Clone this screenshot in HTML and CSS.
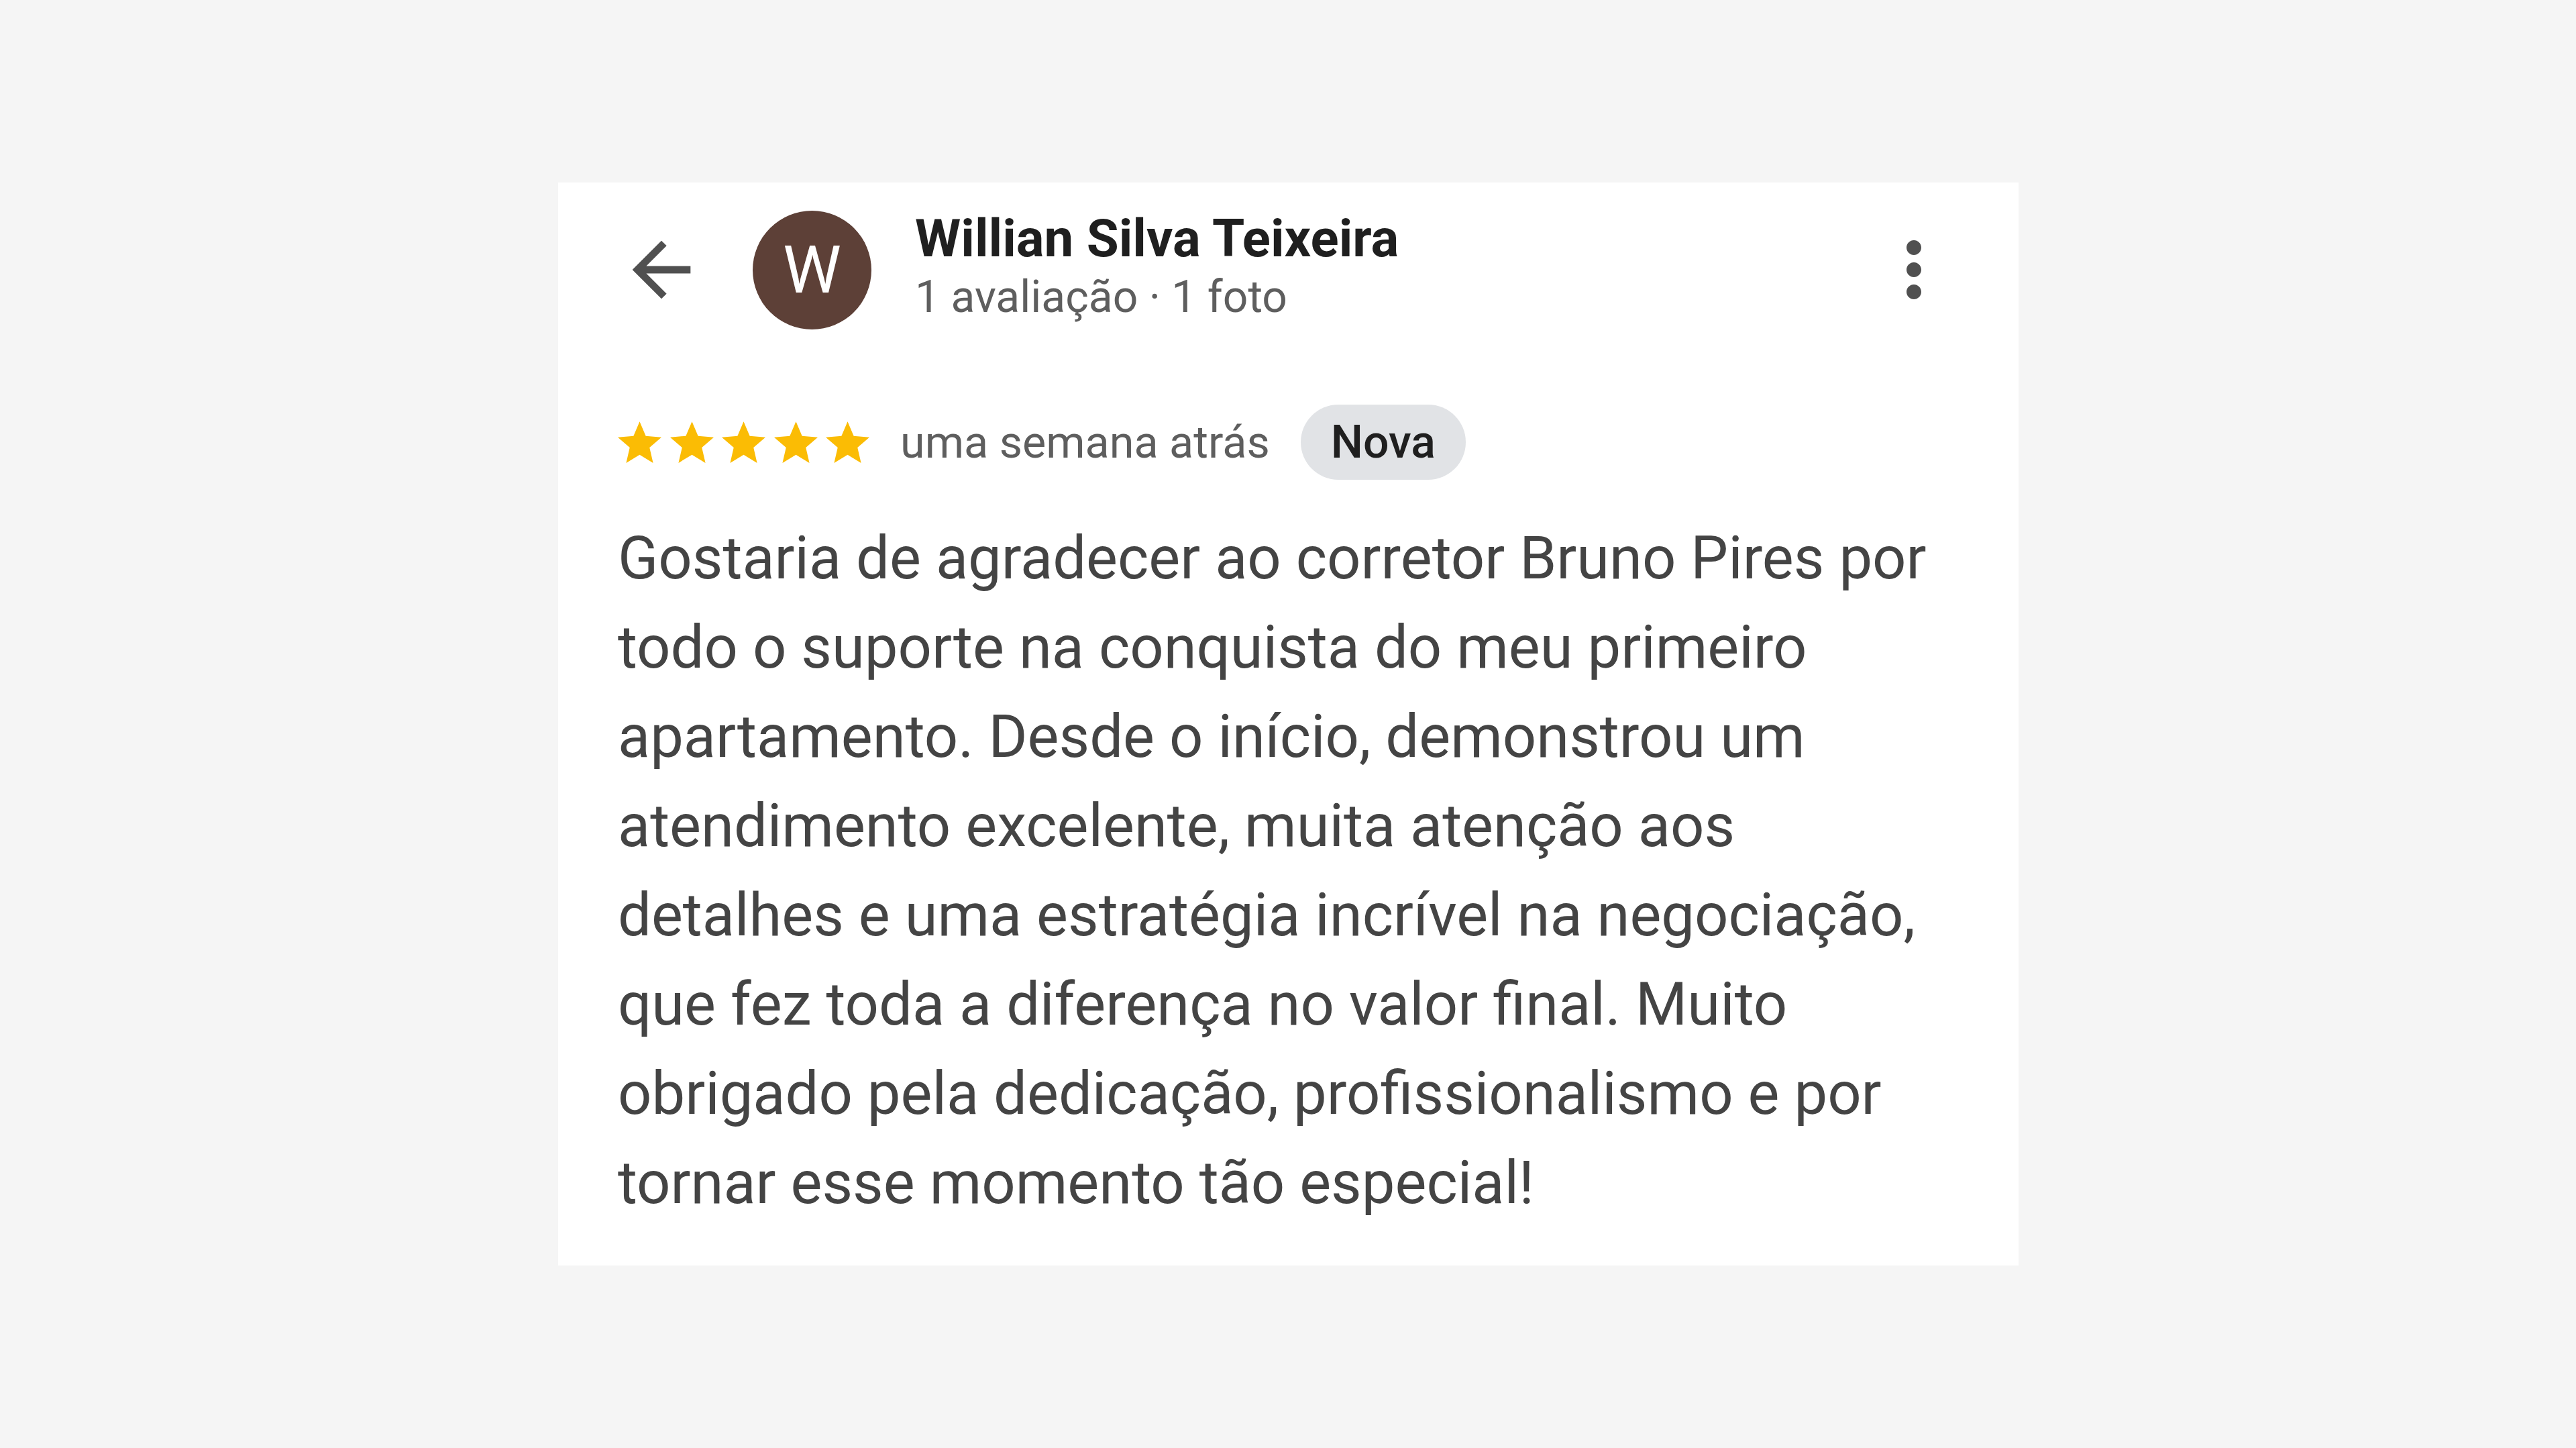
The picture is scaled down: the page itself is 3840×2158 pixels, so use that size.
FILE: index.html
```html
<!DOCTYPE html>
<html lang="pt-BR">

<head>
    <meta charset="UTF-8">
    <title>Avaliação</title>

    <link rel="stylesheet" href="styles.css">

</head>

<body>
    <div class="card">
        <div class="head">
            <svg class="ico back" viewBox="0 0 24 24">
                <path d="M20 11H7.83l5.59-5.59L12 4l-8 8 8 8 1.41-1.41L7.83 13H20v-2z" />
            </svg>
            <div class="avatar">W</div>
            <div class="who">
                <div class="name">Willian Silva Teixeira</div>
                <div class="meta">1 avaliação · 1 foto</div>
            </div>
            <svg class="ico more" viewBox="0 0 24 24">
                <path d="M12 8c1.1 0 2-.9 2-2s-.9-2-2-2-2 .9-2 2 .9 2 2 2zm0 2c-1.1 0-2 .9-2 2s.9 2 2 2 2-.9 2-2-.9-2-2-2zm0 6c-1.1 0-2 .9-2 2s.9 2 2 2 2-.9 2-2-.9-2-2-2z" />
            </svg>
        </div>

        <div class="rating">
            <div class="stars">
                <svg viewBox="2 2 20 19"><path d="M12 17.27L18.18 21l-1.64-7.03L22 9.24l-7.19-.61L12 2 9.19 8.63 2 9.24l5.46 4.73L5.82 21z" /></svg>
                <svg viewBox="2 2 20 19"><path d="M12 17.27L18.18 21l-1.64-7.03L22 9.24l-7.19-.61L12 2 9.19 8.63 2 9.24l5.46 4.73L5.82 21z" /></svg>
                <svg viewBox="2 2 20 19"><path d="M12 17.27L18.18 21l-1.64-7.03L22 9.24l-7.19-.61L12 2 9.19 8.63 2 9.24l5.46 4.73L5.82 21z" /></svg>
                <svg viewBox="2 2 20 19"><path d="M12 17.27L18.18 21l-1.64-7.03L22 9.24l-7.19-.61L12 2 9.19 8.63 2 9.24l5.46 4.73L5.82 21z" /></svg>
                <svg viewBox="2 2 20 19"><path d="M12 17.27L18.18 21l-1.64-7.03L22 9.24l-7.19-.61L12 2 9.19 8.63 2 9.24l5.46 4.73L5.82 21z" /></svg>
            </div>
            <span class="when">uma semana atrás</span>
            <span class="tag">Nova</span>
        </div>

        <p class="text">Gostaria de agradecer ao corretor Bruno Pires por todo o suporte na conquista do meu primeiro apartamento. Desde o início, demonstrou um atendimento excelente, muita atenção aos detalhes e uma estratégia incrível na negociação, que fez toda a diferença no valor final. Muito obrigado pela dedicação, profissionalismo e por tornar esse momento tão especial!</p>
    </div>
</body>

</html>
```

FILE: styles.css
```css
body {
    margin: 0;
    background: #f5f5f5;
    font-family: Roboto, "Liberation Sans", sans-serif;
}

.card {
    width: 2177px;
    height: 1614px;
    box-sizing: border-box;
    margin: 272px 0 0 832px;
    padding: 39px 90px 0 89px;
    background: #fff;
}

.head {
    display: flex;
    align-items: center;
}

.ico {
    fill: #505050;
    flex: none;
}

.back {
    width: 130px;
    height: 130px;
}

.more {
    width: 132px;
    height: 132px;
    margin-left: auto;
}

.avatar {
    width: 177px;
    height: 177px;
    border-radius: 50%;
    background: #5d4037;
    color: #fff;
    font-size: 98px;
    line-height: 177px;
    text-align: center;
    margin-left: 71px;
    flex: none;
}

.who {
    margin-left: 65px;
    padding-bottom: 8px;
}

.name {
    font-size: 78px;
    line-height: 90px;
    font-weight: 700;
    color: #1f1f1f;
}

.meta {
    font-size: 66px;
    line-height: 84px;
    color: #5e5e5e;
}

.rating {
    display: flex;
    align-items: center;
    height: 112px;
    margin-top: 110px;
}

.stars {
    display: flex;
    gap: 12.5px;
}

.stars svg {
    width: 65px;
    height: 62px;
    fill: #fbbc04;
}

.when {
    margin-left: 46px;
    font-size: 66.5px;
    color: #5e5e5e;
}

.tag {
    margin-left: 46px;
    height: 112px;
    line-height: 112px;
    padding: 0 45px;
    border-radius: 56px;
    background: #e1e3e6;
    color: #1f1f1f;
    font-size: 68px;
    font-weight: 500;
}

.text {
    margin: 51px 0 0;
    font-size: 88.5px;
    line-height: 133px;
    color: #444;
}
```
